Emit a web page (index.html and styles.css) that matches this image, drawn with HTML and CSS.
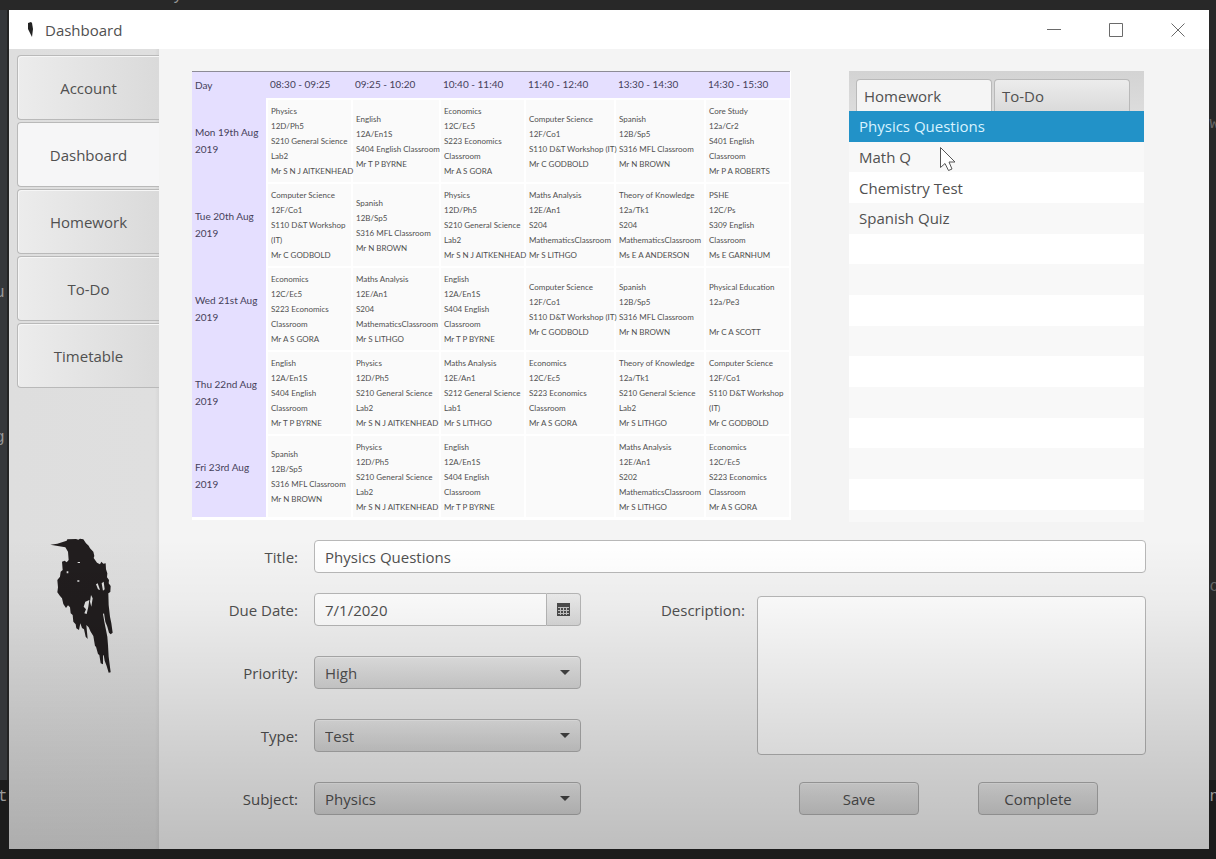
FILE: index.html
```html
<!DOCTYPE html>
<html lang="en">
<head>
    <meta charset="UTF-8">
    <meta name="viewport" content="width=device-width, initial-scale=1.0">
    <title>Dashboard</title>
    <link rel="stylesheet" href="styles.css">
</head>
<body>
    <!-- editor behind the window -->
    <div class="editor" aria-hidden="true">
        <span class="peek peek-top">y</span>
        <span class="peek peek-l1">u</span>
        <span class="peek peek-l2">g</span>
        <span class="peek peek-l3">t</span>
        <span class="peek peek-r1">w</span>
        <span class="peek peek-r2">o</span>
        <span class="peek peek-r3">n</span>
    </div>

    <div class="window">
        <header class="titlebar">
            <svg class="app-icon" viewBox="0 0 8 18"><path d="M2 2l3-1 1 1 1 6-1 8-2-4-2-4z" fill="#222"/></svg>
            <h1>Dashboard</h1>
            <div class="window-buttons">
                <button aria-label="Minimize"><svg viewBox="0 0 16 16"><path d="M1 7.500h14"/></svg></button>
                <button aria-label="Maximize"><svg viewBox="0 0 16 16"><path d="M1.500 1.500h13v13h-13z"/></svg></button>
                <button aria-label="Close"><svg viewBox="0 0 16 16"><path d="M1.500 1.500l13 13M14.500 1.500l-13 13"/></svg></button>
            </div>
        </header>

        <div class="content">
            <nav class="sidebar">
                <button class="side-tab">Account</button>
                <button class="side-tab active">Dashboard</button>
                <button class="side-tab">Homework</button>
                <button class="side-tab">To-Do</button>
                <button class="side-tab">Timetable</button>
                <svg class="raven" viewBox="30 24 192 408">
                    <path fill="#211d1e" fill-rule="evenodd" d="M31 44L52 41 80 32 82 28 108 27 115 29 120 26 130 28 138 40 146 47 150 55 160 65 163 78 161 84 171 98 180 103 184 95 190 101 197 100 198 118 202 130 201 142 207 150 206 160 212 168 211 186 205 190 206 225 210 260 214 280 218 308 212 313 207 308 202 290 196 275 192 250 189 252 193 275 198 300 202 320 204 345 206 380 212 427 206 428 200 408 194 392 191 374 189 378 189 403 182 400 178 375 174 372 168 350 165 348 160 318 152 305 146 292 139 285 143 327 137 320 132 298 126 294 121 280 117 300 109 295 107 283 100 275 98 255 92 250 90 232 84 226 78 234 70 222 66 205 60 198 52 187 54 172 52 150 60 140 62 125 68 120 66 95 74 92 80 97 86 90 84 65 76 52 58 49zM136 215L148 210 145 230 140 252 133 250 138 238 131 230zM153 195L158 205 154 230 150 215zM168 163L173 160 180 180 174 178zM185 160L191 155 194 178 189 182zM80 124h5v6h-5zM113 96h7v3h-7zM112 151h6v4h-6z"/>
                </svg>
            </nav>

            <main class="main">
                <div class="overview">
                    <table class="timetable">
                        <colgroup>
                            <col class="c-day"><col class="c-1"><col class="c-2"><col class="c-3"><col class="c-4"><col class="c-5"><col class="c-6">
                        </colgroup>
                        <thead>
                            <tr>
                                <th>Day</th>
                                <th>08:30 - 09:25</th>
                                <th>09:25 - 10:20</th>
                                <th>10:40 - 11:40</th>
                                <th>11:40 - 12:40</th>
                                <th>13:30 - 14:30</th>
                                <th>14:30 - 15:30</th>
                            </tr>
                        </thead>
                        <tbody>
                            <tr>
                                <th>Mon 19th Aug<br>2019</th>
                                <td>Physics<br>12D/Ph5<br>S210 General Science<br>Lab2<br>Mr S N J AITKENHEAD</td>
                                <td>English<br>12A/En1S<br>S404 English Classroom<br>Mr T P BYRNE</td>
                                <td>Economics<br>12C/Ec5<br>S223 Economics<br>Classroom<br>Mr A S GORA</td>
                                <td>Computer Science<br>12F/Co1<br>S110 D&amp;T Workshop (IT)<br>Mr C GODBOLD</td>
                                <td>Spanish<br>12B/Sp5<br>S316 MFL Classroom<br>Mr N BROWN</td>
                                <td>Core Study<br>12a/Cr2<br>S401 English<br>Classroom<br>Mr P A ROBERTS</td>
                            </tr>
                            <tr>
                                <th>Tue 20th Aug<br>2019</th>
                                <td>Computer Science<br>12F/Co1<br>S110 D&amp;T Workshop<br>(IT)<br>Mr C GODBOLD</td>
                                <td>Spanish<br>12B/Sp5<br>S316 MFL Classroom<br>Mr N BROWN</td>
                                <td>Physics<br>12D/Ph5<br>S210 General Science<br>Lab2<br>Mr S N J AITKENHEAD</td>
                                <td>Maths Analysis<br>12E/An1<br>S204<br>MathematicsClassroom<br>Mr S LITHGO</td>
                                <td>Theory of Knowledge<br>12a/Tk1<br>S204<br>MathematicsClassroom<br>Ms E A ANDERSON</td>
                                <td>PSHE<br>12C/Ps<br>S309 English<br>Classroom<br>Ms E GARNHUM</td>
                            </tr>
                            <tr>
                                <th>Wed 21st Aug<br>2019</th>
                                <td>Economics<br>12C/Ec5<br>S223 Economics<br>Classroom<br>Mr A S GORA</td>
                                <td>Maths Analysis<br>12E/An1<br>S204<br>MathematicsClassroom<br>Mr S LITHGO</td>
                                <td>English<br>12A/En1S<br>S404 English<br>Classroom<br>Mr T P BYRNE</td>
                                <td>Computer Science<br>12F/Co1<br>S110 D&amp;T Workshop (IT)<br>Mr C GODBOLD</td>
                                <td>Spanish<br>12B/Sp5<br>S316 MFL Classroom<br>Mr N BROWN</td>
                                <td>Physical Education<br>12a/Pe3<br><br>Mr C A SCOTT</td>
                            </tr>
                            <tr>
                                <th>Thu 22nd Aug<br>2019</th>
                                <td>English<br>12A/En1S<br>S404 English<br>Classroom<br>Mr T P BYRNE</td>
                                <td>Physics<br>12D/Ph5<br>S210 General Science<br>Lab2<br>Mr S N J AITKENHEAD</td>
                                <td>Maths Analysis<br>12E/An1<br>S212 General Science<br>Lab1<br>Mr S LITHGO</td>
                                <td>Economics<br>12C/Ec5<br>S223 Economics<br>Classroom<br>Mr A S GORA</td>
                                <td>Theory of Knowledge<br>12a/Tk1<br>S210 General Science<br>Lab2<br>Mr S LITHGO</td>
                                <td>Computer Science<br>12F/Co1<br>S110 D&amp;T Workshop<br>(IT)<br>Mr C GODBOLD</td>
                            </tr>
                            <tr>
                                <th>Fri 23rd Aug<br>2019</th>
                                <td>Spanish<br>12B/Sp5<br>S316 MFL Classroom<br>Mr N BROWN</td>
                                <td>Physics<br>12D/Ph5<br>S210 General Science<br>Lab2<br>Mr S N J AITKENHEAD</td>
                                <td>English<br>12A/En1S<br>S404 English<br>Classroom<br>Mr T P BYRNE</td>
                                <td></td>
                                <td>Maths Analysis<br>12E/An1<br>S202<br>MathematicsClassroom<br>Mr S LITHGO</td>
                                <td>Economics<br>12C/Ec5<br>S223 Economics<br>Classroom<br>Mr A S GORA</td>
                            </tr>
                        </tbody>
                    </table>

                    <section class="tasks">
                        <div class="task-tabs">
                            <button class="task-tab active">Homework</button>
                            <button class="task-tab">To-Do</button>
                        </div>
                        <ul class="task-list">
                            <li class="selected">Physics Questions</li>
                            <li>Math Q</li>
                            <li>Chemistry Test</li>
                            <li>Spanish Quiz</li>
                            <li></li>
                            <li></li>
                            <li></li>
                            <li></li>
                            <li></li>
                            <li></li>
                            <li></li>
                            <li></li>
                            <li></li>
                            <li class="partial"></li>
                        </ul>
                        <svg class="cursor" viewBox="0 0 18 26"><path d="M1.500 1.500v20l4.500-4 3.500 7 3.500-1.500-3-7h6z" fill="#fff" stroke="#555"/></svg>
                    </section>
                </div>

                <form class="details">
                    <div class="field">
                        <label for="title">Title:</label>
                        <input type="text" id="title" value="Physics Questions">
                    </div>
                    <div class="columns">
                        <div class="left">
                            <div class="field">
                                <label for="due">Due Date:</label>
                                <div class="date-picker">
                                    <input type="text" id="due" value="7/1/2020">
                                    <button type="button" aria-label="Pick a date">
                                        <svg viewBox="0 0 13 13"><path d="M0 0h13v13H0z" fill="#4c4c4c"/><path d="M1 4.500h11M1 7.500h11M1 10.500h11M3.500 4v8M6.500 4v8M9.500 4v8" stroke="#c4c4c4"/></svg>
                                    </button>
                                </div>
                            </div>
                            <div class="field">
                                <label for="priority">Priority:</label>
                                <div class="combo">
                                    <select id="priority"><option>High</option><option>Medium</option><option>Low</option></select>
                                </div>
                            </div>
                            <div class="field">
                                <label for="type">Type:</label>
                                <div class="combo">
                                    <select id="type"><option>Test</option><option>Quiz</option></select>
                                </div>
                            </div>
                            <div class="field">
                                <label for="subject">Subject:</label>
                                <div class="combo">
                                    <select id="subject"><option>Physics</option><option>Economics</option></select>
                                </div>
                            </div>
                        </div>
                        <div class="right">
                            <label for="description">Description:</label>
                            <div class="right-controls">
                                <textarea id="description"></textarea>
                                <div class="actions">
                                    <button type="button">Save</button>
                                    <button type="button">Complete</button>
                                </div>
                            </div>
                        </div>
                    </div>
                </form>
            </main>
        </div>
    </div>
</body>
</html>
```
FILE: styles.css
```css
* {
    box-sizing: border-box;
}

body {
    margin: 0;
    min-height: 100vh;
    padding: 10px 7px 10px 9px;
    display: flex;
    background-color: #252525;
    color: #505050;
    font-family: "Open Sans", "Noto Sans", sans-serif;
    font-size: 15px;
    line-height: 20px;
}

button,
input,
select,
textarea {
    font: inherit;
    color: inherit;
}

/* editor behind the window */
.editor {
    position: absolute;
    inset: 0;
    overflow: hidden;
    background: linear-gradient(to right, #35373a 7px, #232323 7px, #232323 9px, transparent 9px) 0 10px / 100% 770px no-repeat, linear-gradient(#282828 780px, #1c1c1c 780px);
}

.peek {
    position: absolute;
    color: #999;
    font-family: "Liberation Mono", monospace;
    font-size: 16px;
}

.peek-top { left: 173px; top: -14px; }
.peek-l1 { left: -5px; top: 283px; }
.peek-l2 { left: -5px; top: 428px; }
.peek-l3 { left: -2px; top: 787px; }
.peek-r1 { right: -3px; top: 114px; color: #666; }
.peek-r2 { right: -3px; top: 577px; color: #666; }
.peek-r3 { right: -3px; top: 787px; }

.window {
    position: relative;
    flex: 1;
    display: flex;
    flex-direction: column;
    background-color: #f4f4f4;
}

/* shade over the lower part of the window */
.window::after {
    content: "";
    position: absolute;
    left: 0;
    right: 0;
    bottom: 0;
    height: 310px;
    background: linear-gradient(rgba(0, 0, 0, 0), rgba(0, 0, 0, 0.03) 20%, rgba(0, 0, 0, 0.15) 68%, rgba(0, 0, 0, 0.22));
    pointer-events: none;
}

.titlebar {
    display: flex;
    align-items: center;
    height: 39px;
    padding-left: 17px;
    background-color: #fff;
}

.app-icon {
    width: 8px;
    height: 18px;
}

.titlebar h1 {
    margin: 0 0 0 11px;
    font-size: 15px;
    font-weight: normal;
}

.window-buttons {
    display: flex;
    margin-left: auto;
}

.window-buttons button {
    width: 62px;
    height: 39px;
    padding: 0;
    border: none;
    background: none;
}

.window-buttons svg {
    display: block;
    width: 16px;
    height: 16px;
    margin: auto;
    fill: none;
    stroke: #6a6a6a;
}

.content {
    flex: 1;
    display: flex;
}

/* sidebar */
.sidebar {
    width: 150px;
    padding: 6px 0 0 8px;
    display: flex;
    flex-direction: column;
    gap: 2px;
    background: linear-gradient(to right, #dedede, #dfdfdf 146px, #d6d6d6);
}

.side-tab {
    height: 65px;
    border: 1px solid #b9b9b9;
    border-right: none;
    border-radius: 4px 0 0 4px;
    background: linear-gradient(to right, #ececec, #dadada);
    box-shadow: inset 1px 1px #f6f6f6;
}

.side-tab.active {
    background: #f6f6f7;
}

.raven {
    width: 64px;
    height: 136px;
    margin: 148px 0 0 33px;
}

.main {
    flex: 1;
    min-width: 0;
    padding: 22px 63px 33px 33px;
}

.overview {
    display: grid;
    grid-template-columns: minmax(0, 1fr) 295px;
    align-items: start;
    gap: 59px;
    margin-right: 2px;
}

/* timetable */
.timetable {
    width: 100%;
    table-layout: fixed;
    border-collapse: collapse;
    border-top: 1px solid #8d8b96;
    border-bottom: 3px solid #fff;
    background-color: #fff;
    font-family: Lato, sans-serif;
    line-height: 15px;
    white-space: nowrap;
}

.c-day { width: 75px; }
.c-1, .c-3, .c-6 { width: 85px; }
.c-2 { width: 88px; }
.c-4 { width: 90px; }
.c-5 { width: 90px; }

.timetable th {
    padding: 0 3px;
    background-color: #e5dfff;
    color: #45415a;
    font-size: 10px;
    font-weight: normal;
    line-height: 17px;
    text-align: left;
}

.timetable thead th {
    height: 27px;
}

.timetable td {
    height: 84px;
    padding: 2px 3px 0;
    border: 2px solid #fff;
    background-color: #fafafa;
    font-size: 8px;
}

/* homework / to-do list */
.tasks {
    position: relative;
    display: flex;
    flex-direction: column;
    min-height: 451px;
}

.task-tabs {
    display: flex;
    gap: 2px;
    height: 40px;
    padding: 8px 7px 0;
    background: linear-gradient(#d3d3d3, #dcdcdc);
}

.task-tab {
    width: 136px;
    padding: 0 7px;
    border: 1px solid #b9b9b9;
    border-bottom: none;
    border-radius: 4px 4px 0 0;
    background: linear-gradient(#ececec, #dadada);
    text-align: left;
}

.task-tab.active {
    background: #f5f5f5;
}

.task-list {
    flex: 1;
    display: flex;
    flex-direction: column;
    margin: 0;
    padding: 0;
    list-style: none;
}

.task-list li {
    flex: 5 0 0;
    display: flex;
    align-items: center;
    padding-left: 10px;
    background-color: #fff;
}

.task-list li:nth-child(even) {
    background-color: #f8f8f8;
}

.task-list li.selected {
    background-color: #2292c8;
    color: #d8f3ff;
}

.task-list li.partial {
    flex-grow: 2;
}

.cursor {
    position: absolute;
    left: 90px;
    top: 75px;
    width: 18px;
    height: 26px;
}

/* details form */
.details {
    margin-top: 18px;
}

.field {
    display: flex;
    align-items: center;
}

.field label {
    width: 106px;
    margin-right: 16px;
    text-align: right;
}

.details input,
.details select,
.details textarea {
    border: 1px solid #b8b8b8;
    border-radius: 4px;
    background-color: #fff;
}

.details input {
    flex: 1;
    min-width: 0;
    height: 33px;
    padding: 0 10px;
}

.columns {
    display: flex;
    margin-top: 20px;
}

.left {
    display: flex;
    flex-direction: column;
    gap: 30px;
}

.date-picker,
.combo {
    position: relative;
    display: flex;
    width: 267px;
}

.date-picker input {
    border-radius: 4px 0 0 4px;
}

.date-picker button {
    width: 34px;
    padding: 0;
    border: 1px solid #b8b8b8;
    border-left: none;
    border-radius: 0 4px 4px 0;
    background: linear-gradient(#eee, #dadada);
}

.date-picker svg {
    display: block;
    width: 13px;
    height: 13px;
    margin: auto;
}

.combo select {
    appearance: none;
    width: 100%;
    height: 33px;
    padding: 0 10px;
    border-color: #b0b0b0;
    background: linear-gradient(#e9e9e9, #d6d6d6);
    box-shadow: inset 0 1px #f2f2f2;
}

.combo::after {
    content: "";
    position: absolute;
    right: 11px;
    top: 14px;
    border: 5px solid transparent;
    border-top-color: #444;
    border-bottom: none;
    pointer-events: none;
}

.right {
    flex: 1;
    display: flex;
    justify-content: flex-end;
    gap: 12px;
}

.right label {
    margin-top: 7px;
}

.right-controls {
    width: 389px;
    padding-top: 3px;
}

.details textarea {
    display: block;
    width: 100%;
    height: 159px;
    resize: none;
}

.actions {
    display: flex;
    justify-content: center;
    gap: 59px;
    margin-top: 27px;
    padding-right: 6px;
}

.actions button {
    width: 120px;
    height: 33px;
    padding: 0;
    border: 1px solid #b0b0b0;
    border-radius: 4px;
    background: linear-gradient(#e9e9e9, #d6d6d6);
    box-shadow: inset 0 1px #f2f2f2;
}
```
